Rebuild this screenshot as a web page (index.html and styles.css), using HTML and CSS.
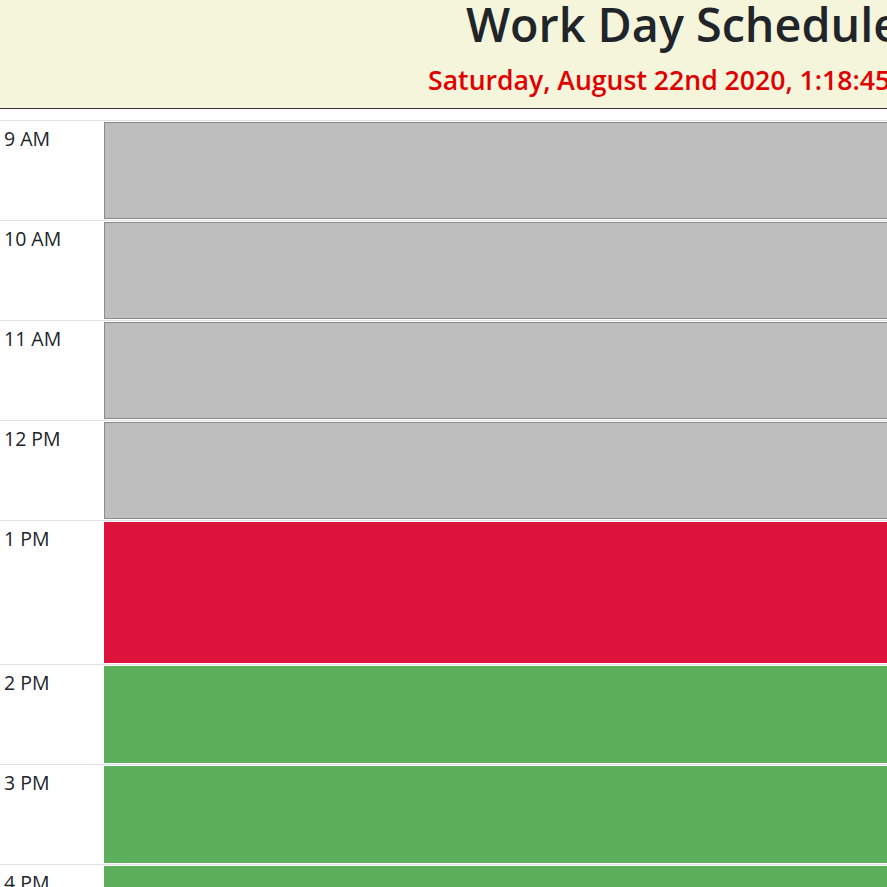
FILE: index.html
```html
<!DOCTYPE html>
<html lang="en">
<head>
    <meta charset="UTF-8">
    <meta name="viewport" content="width=device-width, initial-scale=1.0">
    <title>Work Day Scheduler</title>
    <link rel="stylesheet" href="styles.css">
</head>
<body>
    <div class="page">
        <header class="jumbotron">
            <h1 class="title">Work Day Schedule</h1>
            <p class="current-day">Saturday, August 22nd 2020, 1:18:45 PM</p>
        </header>

        <div class="schedule">
            <div class="time-block">
                <div class="hour">9 AM</div>
                <textarea class="description past"></textarea>
            </div>
            <div class="time-block">
                <div class="hour">10 AM</div>
                <textarea class="description past"></textarea>
            </div>
            <div class="time-block">
                <div class="hour">11 AM</div>
                <textarea class="description past"></textarea>
            </div>
            <div class="time-block">
                <div class="hour">12 PM</div>
                <textarea class="description past"></textarea>
            </div>
            <div class="time-block now">
                <div class="hour">1 PM</div>
                <textarea class="description present"></textarea>
            </div>
            <div class="time-block">
                <div class="hour">2 PM</div>
                <textarea class="description future"></textarea>
            </div>
            <div class="time-block">
                <div class="hour">3 PM</div>
                <textarea class="description future"></textarea>
            </div>
            <div class="time-block">
                <div class="hour">4 PM</div>
                <textarea class="description future"></textarea>
            </div>
            <div class="time-block">
                <div class="hour">5 PM</div>
                <textarea class="description future"></textarea>
            </div>
        </div>
    </div>
</body>
</html>
```

FILE: styles.css
```css
html,
body {
    overflow: hidden;
}

body {
    font-family: 'Open Sans', 'Noto Sans', sans-serif;
    margin: 0;
    padding: 0;
    color: #212529;
    background-color: #fff;
}

.page {
    width: 1366px;
}

.jumbotron {
    display: flex;
    flex-direction: column;
    align-items: center;
    height: 108px;
    background-color: #f5f5dc;
    border-bottom: 1px solid #333;
    margin-bottom: 11px;
}

.title {
    margin: 0;
    font-size: 46.7px;
    font-weight: 600;
    line-height: 48px;
}

.current-day {
    margin: 0;
    padding-top: 14px;
    font-size: 26.6px;
    font-weight: 600;
    line-height: 36px;
    color: #e00000;
}

.time-block {
    display: flex;
    box-sizing: border-box;
    height: 100px;
    padding: 1px 0;
    border-top: 1px solid #dee2e6;
}

.time-block.now {
    height: 144px;
}

.hour {
    width: 100px;
    padding: 5px 0 0 4px;
    font-size: 19.5px;
    line-height: 24px;
}

.description {
    flex: 1;
    margin: 0;
    padding: 0;
    resize: none;
    box-sizing: border-box;
    border: 1px solid #8a8a8a;
}

.past {
    background-color: #bebebe;
}

.present {
    background-color: #dc143c;
    border-color: #dc143c;
}

.future {
    background-color: #5cb05c;
    border-color: #5cb05c;
}
```
